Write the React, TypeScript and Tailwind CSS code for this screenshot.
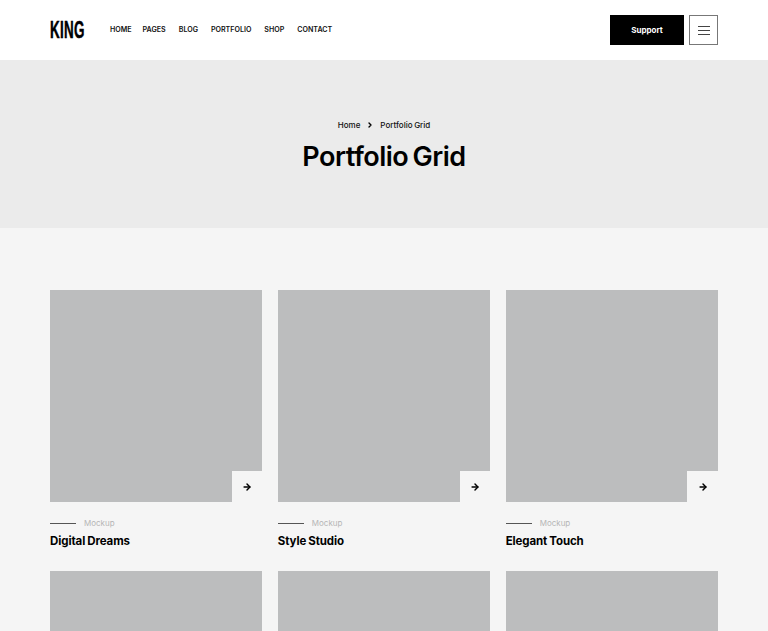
import React from 'react';
import { ArrowRight, ChevronRight } from 'lucide-react';

const navItems = ['HOME', 'PAGES', 'BLOG', 'PORTFOLIO', 'SHOP', 'CONTACT'];

const projects = [
  { tag: 'Mockup', title: 'Digital Dreams' },
  { tag: 'Mockup', title: 'Style Studio' },
  { tag: 'Mockup', title: 'Elegant Touch' },
  { tag: 'Mockup', title: 'Urban Canvas' },
  { tag: 'Mockup', title: 'Fresh Ideas' },
  { tag: 'Mockup', title: 'Bold Vision' },
];

const ProjectCard: React.FC<{ tag: string; title: string }> = ({ tag, title }) => (
  <div>
    <div className="relative h-[212px] bg-[#bcbdbe]">
      <div className="absolute right-0 bottom-0 flex h-[31px] w-[30.5px] items-center justify-center bg-[#f5f5f5]">
        <ArrowRight size={10} strokeWidth={3.5} className="text-black" />
      </div>
    </div>
    <div className="mt-[16px] flex h-[10px] items-center gap-2">
      <span className="h-px w-[26px] bg-[#555]" />
      <span className="text-[8px] leading-[10px] text-[#b5b5b5]">{tag}</span>
    </div>
    <h3 className="mt-[4px] text-[11.5px] leading-[18px] font-bold tracking-[-0.1px] [word-spacing:-0.6px] text-black">{title}</h3>
  </div>
);

export default function App() {
  return (
    <div className="min-h-screen bg-[#f5f5f5] font-['Inter',sans-serif]">
      <header className="flex h-[60px] items-center justify-between bg-white px-[50px]">
        <div className="flex items-center">
          <span className="w-[35px] origin-left scale-x-[0.56] font-['Liberation_Sans',sans-serif] text-[24px] leading-none font-bold tracking-[0.5px] whitespace-nowrap text-black [-webkit-text-stroke:0.5px_black]">
            KING
          </span>
          <nav className="ml-[25px] flex items-center gap-[13px]">
            {navItems.map((item) => (
              <a key={item} href="#" className="text-[7.1px] leading-none font-semibold text-[#111] first:-mr-[2px]">
                {item}
              </a>
            ))}
          </nav>
        </div>
        <div className="flex items-center gap-[5px]">
          <button className="h-[30px] w-[74px] bg-black text-[8px] font-bold text-white">Support</button>
          <button className="flex h-[30px] w-[29px] flex-col items-center justify-center gap-[3px] border border-[#777] bg-white">
            <span className="h-px w-[12px] bg-[#444]" />
            <span className="h-px w-[12px] bg-[#444]" />
            <span className="h-px w-[12px] bg-[#444]" />
          </button>
        </div>
      </header>

      <section className="flex h-[168px] flex-col items-center bg-[#ebebeb] pt-[60px]">
        <div className="flex h-[10px] items-center text-[8px] leading-none font-medium [word-spacing:-0.5px] text-[#111]">
          <span>Home</span>
          <ChevronRight size={8} strokeWidth={4} className="mx-[6px] text-black" />
          <span>Portfolio Grid</span>
        </div>
        <h1 className="mt-[10px] text-[27px] leading-[34px] font-semibold tracking-[-0.5px] [word-spacing:-2px] text-black">Portfolio Grid</h1>
      </section>

      <section className="px-[50px] pt-[62px] pb-[60px]">
        <div className="grid grid-cols-3 gap-x-[15.5px] gap-y-[21px]">
          {projects.map((p) => (
            <ProjectCard key={p.title} tag={p.tag} title={p.title} />
          ))}
        </div>
      </section>
    </div>
  );
}
